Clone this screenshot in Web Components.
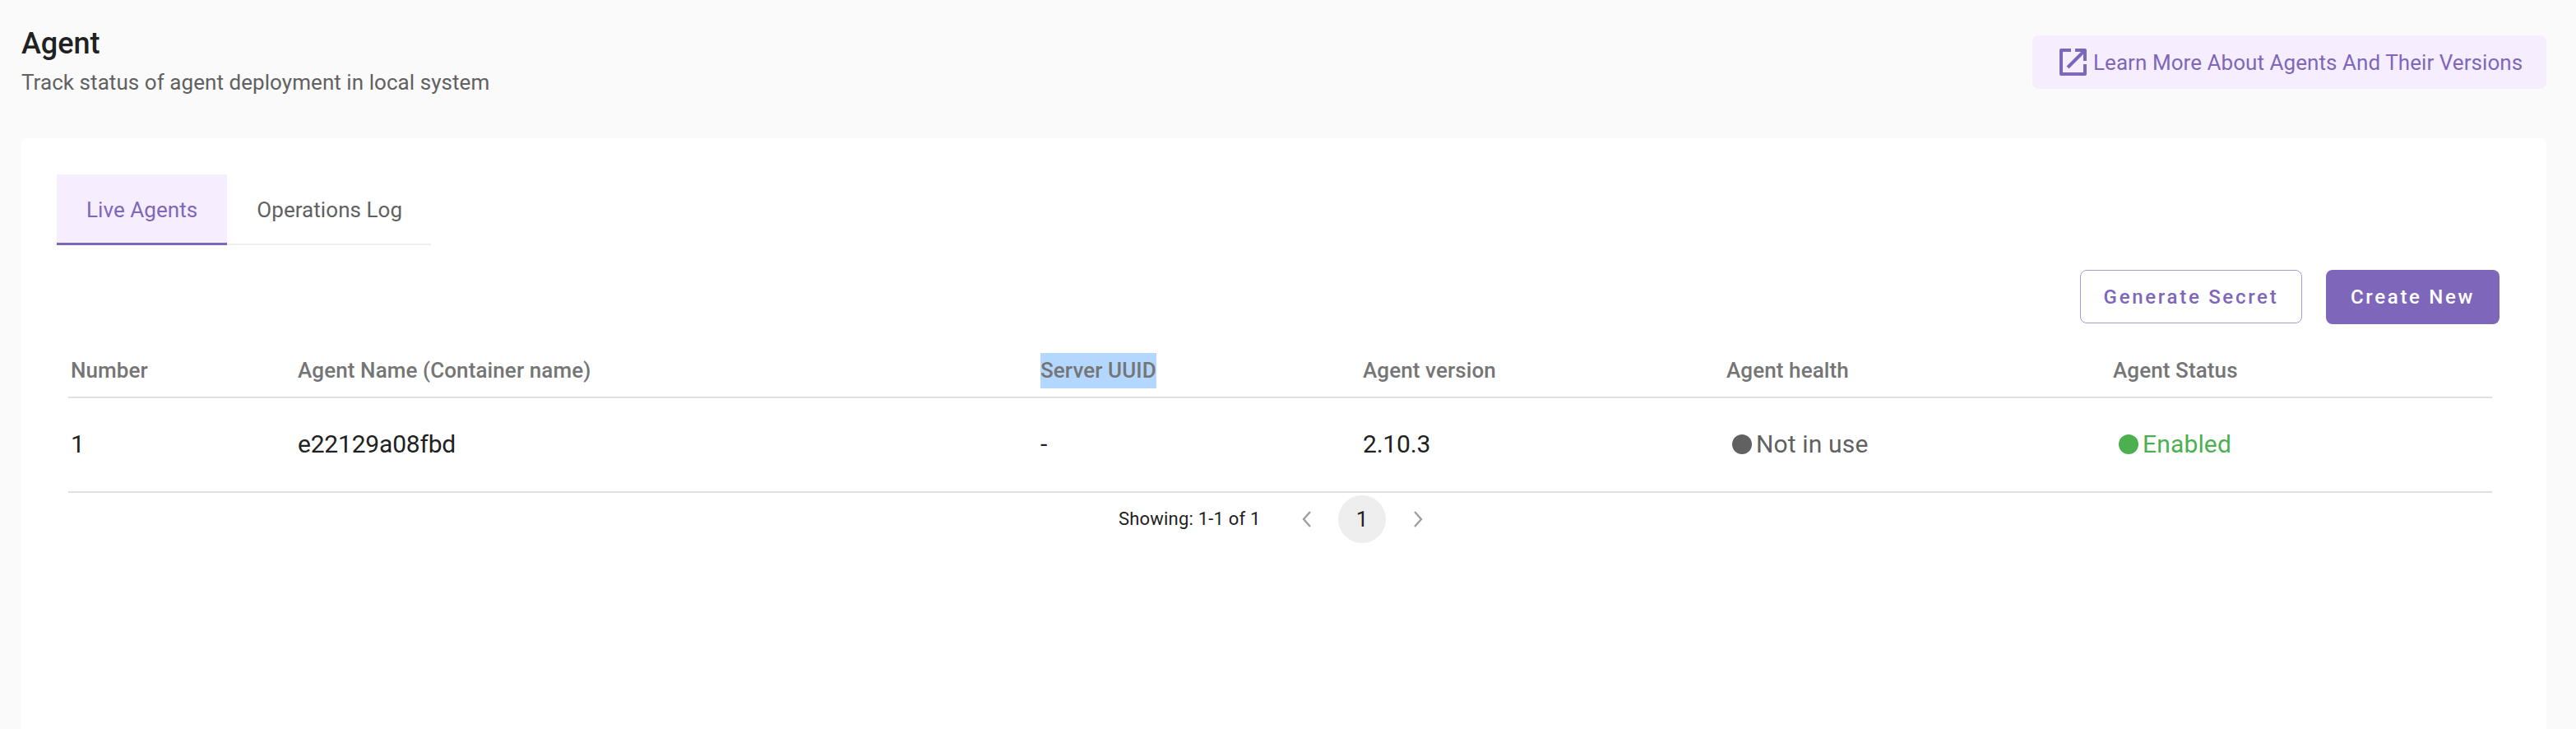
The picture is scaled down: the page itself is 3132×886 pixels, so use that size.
<!DOCTYPE html>
<html lang="en"><head><meta charset="utf-8"><title>Agent</title>
<style>
html,body{margin:0;padding:0;height:886px;overflow:hidden;background:#fafafa}
body{font-family:Roboto,"Liberation Sans",sans-serif}
</style></head>
<body>
<agent-page></agent-page>
<script>
function def(name, css, html){
  customElements.define(name, class extends HTMLElement{
    constructor(){super();const s=this.attachShadow({mode:'open'});s.innerHTML='<style>'+css+'</style>'+html;}
  });
}
def('page-header',`
:host{display:flex;justify-content:space-between;align-items:flex-start;padding:31px 36px 0 26px;height:137px;box-sizing:border-box}
h1{margin:0;font:500 36px/44px Roboto,sans-serif;color:#212121}
p{margin:3px 0 0;font:400 26px/44px Roboto,sans-serif;letter-spacing:.06px;color:#616161;white-space:nowrap}
.titles{display:flex;flex-direction:column}
::slotted(*){margin-top:12px}
`,`<div class="titles"><h1>Agent</h1><p>Track status of agent deployment in local system</p></div><slot></slot>`);
def('link-button',`
:host{display:flex;align-items:center;gap:8px;width:625px;height:65px;box-sizing:border-box;padding-left:33px;background:#f6eefe;border-radius:8px;color:#7e67ba;font:400 26px/36px Roboto,sans-serif;letter-spacing:.06px;white-space:nowrap}
svg{width:33px;height:33px;flex:none}
`,`<svg viewBox="0 0 33 33" fill="none" stroke="#7e67ba" stroke-width="4" stroke-linejoin="round"><path d="M14 2H2v29h29V19"/><path d="M10 23 30 3M19 2h12v13"/></svg><span><slot></slot></span>`);
def('tab-bar',`
:host{display:flex;width:455px;height:86px;box-sizing:border-box;border-bottom:2px solid #eeeeee}
`,`<slot></slot>`);
def('tab-item',`
:host{display:flex;align-items:center;justify-content:center;height:86px;box-sizing:border-box;font:400 26px/36px Roboto,sans-serif;letter-spacing:.06px;color:#616161;padding:0 36px;white-space:nowrap}
:host([active]){background:#f6eefe;color:#7e67ba;border-bottom:3px solid #7e67ba;padding-top:3px}
`,`<slot></slot>`);
def('action-button',`
:host{display:flex;align-items:center;justify-content:center;box-sizing:border-box;border-radius:8px;font:500 24px/32px Roboto,sans-serif;letter-spacing:2.7px;white-space:nowrap}
:host([kind=outline]){width:270px;height:65px;background:#fff;color:#7e67ba;border:1px solid #a89bd0}
:host([kind=fill]){width:211px;height:66px;background:#7e67ba;color:#fff}
`,`<slot></slot>`);
def('status-dot',`
:host{display:flex;align-items:center;gap:5px;font:400 30px/40px Roboto,sans-serif;letter-spacing:.15px;color:var(--c);padding-left:7px}
i{width:24px;height:24px;border-radius:50%;background:var(--c);flex:none}
`,`<i></i><span><slot></slot></span>`);
def('agent-table',`
:host{display:grid;grid-template-columns:276px 903px 392px 442px 470px 464px;width:2947px;font-family:Roboto,sans-serif}
::slotted(*){box-sizing:border-box;display:flex;align-items:center;padding-left:3px;white-space:nowrap}
::slotted([h]){height:84px;padding-top:18px;border-bottom:2px solid #e0e0e0;font:500 26px/32px Roboto,sans-serif;letter-spacing:.1px;color:#757575}
::slotted([c]){height:115px;padding-bottom:2px;border-bottom:2px solid #e0e0e0;font:400 30px/40px Roboto,sans-serif;letter-spacing:-.2px;color:#212121}
`,`<slot></slot>`);
def('page-nav',`
:host{display:flex;align-items:center;height:58px;margin:3px 0 0 1277px;font:400 22px/32px Roboto,sans-serif;color:#212121}
.s{width:172px;letter-spacing:.2px;white-space:nowrap}
svg{width:14px;height:24px;flex:none}
.a{margin-left:50px}
.p{width:58px;height:58px;border-radius:50%;background:#eeeeee;display:flex;align-items:center;justify-content:center;font-size:26px;margin:0 32px 0 31px}
`,`<span class="s">Showing: 1-1 of 1</span><svg class="a" viewBox="0 0 14 24" fill="none" stroke="#9e9e9e" stroke-width="2.4"><path d="M11 3 3 12l8 9"/></svg><span class="p">1</span><svg viewBox="0 0 14 24" fill="none" stroke="#9e9e9e" stroke-width="2.4"><path d="M3 3l8 9-8 9"/></svg>`);
def('content-card',`
:host{display:block;margin:31px 36px 0 26px;background:#fff;border-radius:8px;height:760px;padding:44px 57px 0 43px;box-sizing:border-box}
.acts{display:flex;justify-content:flex-end;gap:29px;margin-top:30px;height:66px}
.tw{margin:6px 0 0 14px}
`,`<slot name="tabs"></slot><div class="acts"><slot name="actions"></slot></div><div class="tw"><slot></slot></div>`);
def('agent-page',`
:host{display:block;background:#fafafa;height:886px;overflow:hidden}
.sel{background:#b3d7ff;display:inline-flex;align-items:center;height:43px}
`,`<page-header><link-button>Learn More About Agents And Their Versions</link-button></page-header>
<content-card>
<tab-bar slot="tabs"><tab-item active>Live Agents</tab-item><tab-item>Operations Log</tab-item></tab-bar>
<action-button slot="actions" kind="outline">Generate Secret</action-button>
<action-button slot="actions" kind="fill">Create New</action-button>
<agent-table>
<div h>Number</div><div h>Agent Name (Container name)</div><div h><span class="sel">Server UUID</span></div><div h>Agent version</div><div h>Agent health</div><div h>Agent Status</div>
<div c>1</div><div c>e22129a08fbd</div><div c>-</div><div c>2.10.3</div><div c><status-dot style="--c:#616161">Not in use</status-dot></div><div c><status-dot style="--c:#4caf50">Enabled</status-dot></div>
</agent-table>
<page-nav></page-nav>
</content-card>`);
</script>
</body></html>
